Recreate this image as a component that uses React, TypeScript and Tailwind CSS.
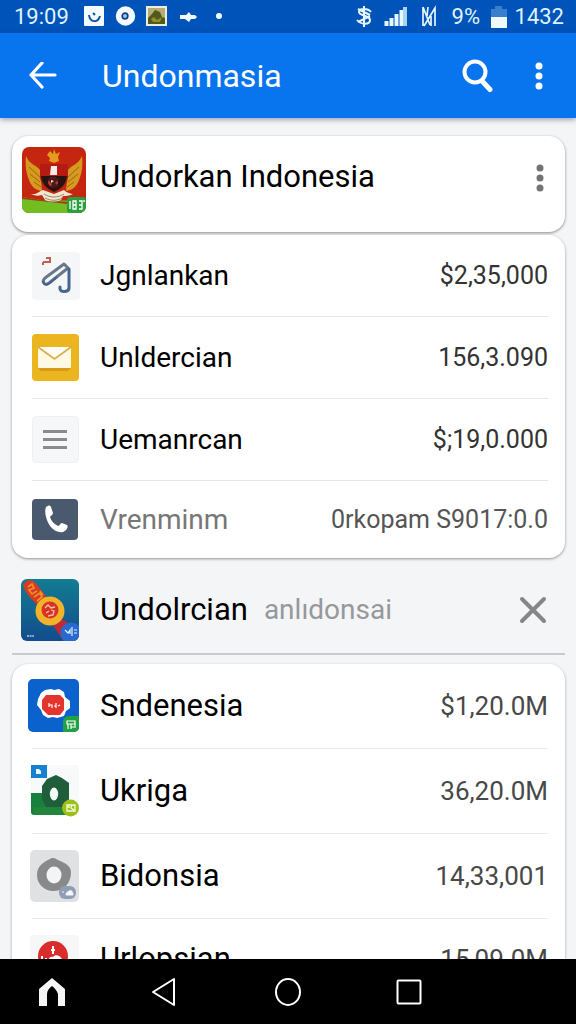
import type { ReactNode } from "react";

type Row = {
  name: string;
  amount: string;
  icon: ReactNode;
  muted?: boolean;
};

function MoreDots({ className }: { className: string }) {
  return (
    <svg viewBox="0 0 10 30" className={className} fill="currentColor" aria-hidden>
      <circle cx="5" cy="5" r="3.5" />
      <circle cx="5" cy="15" r="3.5" />
      <circle cx="5" cy="25" r="3.5" />
    </svg>
  );
}

function EmblemIcon() {
  return (
    <svg viewBox="0 0 64 66" className="h-[66px] w-16 shrink-0" aria-hidden>
      <clipPath id="emblem">
        <rect width="64" height="66" rx="7" />
      </clipPath>
      <g clipPath="url(#emblem)">
        <rect width="64" height="66" fill="#c4260f" />
        <path d="M0 50l20 3 44 1v12H0z" fill="#72bd22" />
        <path d="M0 50l20 3 26 2v2L0 52z" fill="#a33c14" />
        <path
          d="M4 9c4 9 9 8 14 14l2 21c-7-1-11-5-13-11C4 26 3 17 4 9zM60 9c-4 9-9 8-14 14l-2 21c7-1 11-5 13-11 3-7 4-16 3-24z"
          fill="#d69a20"
        />
        <path
          d="M7 20l11 10M8 27l10 8M12 35l7 5M57 20L46 30M56 27l-10 8M52 35l-7 5"
          stroke="#9c6510"
          strokeWidth="1"
        />
        <path d="M28 4l3 3 1-5 2 5 4-2-2 5 1 4-5 2-5-2 1-3-3-3z" fill="#e59b1c" />
        <path d="M18 17h28v12c0 8-5 13-14 16-9-3-14-8-14-16z" fill="#b51b12" />
        <path d="M19 29h26c-1 8-5 12-13 16-8-4-12-8-13-16z" fill="#271411" />
        <path d="M29 19h6v9h-7z" fill="#f5eee7" />
        <circle cx="31" cy="35" r="5" fill="#c53b2c" />
        <path d="M25 32l6-2 7 2-5 4 4 4-9 1 2-4z" fill="#4b1a18" />
        <path d="M29 33l3 1-3 2z" fill="#f6ddd5" />
        <path
          d="M9 47c6 1 8-3 12-4l11 4 10-4c3 3 5 3 9 4-4 2-7 2-10 2l-2 4c-5 2-11 2-16 0l-3-5c-4 1-7 1-11-1z"
          fill="#eee6d1"
        />
        <path d="M22 47c6 4 14 4 20 0M23 51c6 3 12 3 17 0" stroke="#9b845f" strokeWidth="1" fill="none" />
        <rect x="45" y="50" width="19" height="16" rx="3" fill="#2c9e3d" />
        <path
          d="M48 54v8M51 54h3v8h-3zM51 58h3M57 54h3v8h-3M57 58h3M62 53v2"
          stroke="#fff"
          strokeWidth="1.3"
          fill="none"
        />
      </g>
    </svg>
  );
}

function SketchIcon() {
  return (
    <svg viewBox="0 0 48 48" className="size-12" aria-hidden>
      <rect width="48" height="48" rx="4" fill="#f4f6f8" />
      <path d="M11 13v-3M11 10h3M14 6h4v5M14 10h3" stroke="#c35d55" strokeWidth="2" fill="none" />
      <path
        d="M32 12L13 26c-4 4 0 8 4 5l19-15z"
        fill="none"
        stroke="#68788a"
        strokeWidth="3"
        strokeLinejoin="round"
      />
      <path d="M11 29c1 5 4 4 7 2l7-6" fill="none" stroke="#3f6390" strokeWidth="2" />
      <path
        d="M37 17v19c0 4-8 5-9 1v-2"
        fill="none"
        stroke="#45678f"
        strokeWidth="3"
        strokeLinecap="round"
      />
    </svg>
  );
}

function MailIcon() {
  return (
    <svg viewBox="0 0 48 48" className="size-12" aria-hidden>
      <rect width="47" height="47" rx="4" fill="#ebb51f" />
      <path d="M6 34h33l-3 3H9z" fill="#d69a14" />
      <rect x="6" y="13" width="33" height="21" rx="1" fill="#fff8e3" />
      <path d="M6 13l16.5 12L39 13" fill="#fffdf5" stroke="#d8ae48" strokeWidth="1.6" />
    </svg>
  );
}

function LinesIcon() {
  return (
    <svg viewBox="0 0 48 48" className="size-12" aria-hidden>
      <rect x=".5" y=".5" width="46" height="46" rx="4" fill="#f6f7f9" stroke="#eff0f3" />
      <path d="M11 15.500h24M11 23.500h24M11 31.500h24" stroke="#8b8b8f" strokeWidth="3" />
    </svg>
  );
}

function PhoneIcon() {
  return (
    <svg viewBox="0 0 48 42" className="h-[42px] w-12" aria-hidden>
      <rect width="46" height="41" rx="4" fill="#4a596e" />
      <path
        d="M14 8c2-2 4-2 5 0l2 6c0 2-3 3-3 4 1 4 4 7 8 9 2 0 2-3 4-3l5 2c2 2-1 6-4 7-4 1-9-1-13-6-4-6-6-14-4-19z"
        fill="#fff"
      />
    </svg>
  );
}

function MedalIcon() {
  return (
    <svg viewBox="0 0 58 62" className="h-[62px] w-[58px] shrink-0" aria-hidden>
      <defs>
        <linearGradient id="medal-sky" x1="0" y1="0" x2="0" y2="1">
          <stop offset="0" stopColor="#137c91" />
          <stop offset="1" stopColor="#124c8d" />
        </linearGradient>
        <clipPath id="medal">
          <rect width="58" height="62" rx="6" />
        </clipPath>
      </defs>
      <g clipPath="url(#medal)">
        <rect width="58" height="62" fill="url(#medal-sky)" />
        <path d="M2 6C6-2 14 1 17 7l10 13-9 7C10 20 4 14 2 6z" fill="#d43c23" />
        <path
          d="M7 8l4-3 2 4-5 2 3 4 5-3M13 18l6-4 2 4-5 4M19 12l3 4"
          stroke="#f28c28"
          strokeWidth="1.7"
          fill="none"
        />
        <path d="M31 45l9-5c7 3 12 7 18 11v13H44z" fill="#bd2b38" />
        <circle cx="29" cy="32" r="14.5" fill="#f2b229" />
        <circle cx="29" cy="31" r="8.5" fill="#d83224" />
        <path d="M24 29l3-3 3 3 4-1M25 34l3-2M30 31l3 1-1 4-5 1" stroke="#f6c5a8" strokeWidth="1.3" fill="none" />
        <circle cx="50" cy="54" r="10.5" fill="#2869cf" />
        <path d="M44 51l3 3 2-3v4M51 48v9M53 51h3M53 54h3" stroke="#e6f0ff" strokeWidth="1.2" fill="none" />
        <path d="M6 57h7" stroke="#a9cbe0" strokeWidth="1.5" strokeDasharray="2 .6" />
      </g>
    </svg>
  );
}

function BadgeBlueIcon() {
  return (
    <svg viewBox="0 0 52 54" className="h-[54px] w-[52px]" aria-hidden>
      <clipPath id="badge-blue">
        <rect width="51" height="53" rx="5" />
      </clipPath>
      <g clipPath="url(#badge-blue)">
        <rect width="52" height="54" fill="#0c62cd" />
        <path
          d="M13 14l4-3 6-1 3 1 5-1 5 3 1 5 5 4v7l-4 3-2 5-7 2-4-1-5 1-5-3-2-5-4-5 1-6z"
          fill="#fff"
        />
        <path d="M18 16h14l4 4v11l-4 5H20l-6-6v-9z" fill="#e4352d" />
        <path d="M21 24v4M21 26h3v3M26 27h2M28 24v5M30 27l2-1" stroke="#fff" strokeWidth="1.2" fill="none" />
        <path d="M35 53V43c0-4 3-6 7-6h10v16z" fill="#22a143" />
        <path d="M39 42h8v3h-8zM40 50v-5M43 45v5M46 48h-3M47 45v4" stroke="#fff" strokeWidth="1.2" fill="none" />
      </g>
    </svg>
  );
}

function BadgeGreenIcon() {
  return (
    <svg viewBox="0 0 52 54" className="h-[54px] w-[52px]" aria-hidden>
      <rect x="3" y="1" width="48" height="50" rx="3" fill="#f7faf9" />
      <path d="M3 29h17v22H6c-2 0-3-1-3-3z" fill="#16803c" />
      <path d="M5 43h38v8H6z" fill="#23853b" />
      <rect x="3" y="1" width="16" height="13" fill="#1681cf" />
      <path d="M8 5h3l2 2v3H8z" fill="#eaf6ff" />
      <path d="M28 11l6 3 7 5v19l-5 5H18l-4-8V22l5-7z" fill="#1f5d3b" />
      <ellipse cx="26" cy="30" rx="4.2" ry="6.5" fill="#f3faf5" />
      <circle cx="42.5" cy="44" r="8.5" fill="#9dbf19" />
      <path d="M39 41h8v6h-8zM39 43h3M44 41l-1 3 3 2" stroke="#f4ffd8" strokeWidth="1.3" fill="none" />
    </svg>
  );
}

function BadgeGreyIcon() {
  return (
    <svg viewBox="0 0 52 54" className="h-[54px] w-[52px]" aria-hidden>
      <rect x="2" y="1" width="49" height="52" rx="5" fill="#dfe1e3" />
      <path
        d="M25 9c3 0 4 2 7 3 5 2 11 5 11 11 0 10-6 19-17 19S9 34 9 26c0-7 4-11 9-14 3-1 4-3 7-3z"
        fill="#87898b"
      />
      <ellipse cx="26" cy="26" rx="7.5" ry="8.5" fill="#f3f4f5" />
      <rect x="31" y="37" width="17" height="13" rx="6" fill="#8f9db5" />
      <path d="M38 46c0-3 2-3 3-4 3-1 4 1 4 4zM34 43h2" fill="#f4f7fc" stroke="#f4f7fc" strokeWidth="1" />
    </svg>
  );
}

function BadgeRedIcon() {
  return (
    <svg viewBox="0 0 52 54" className="h-[54px] w-[52px]" aria-hidden>
      <rect x="2" y="3" width="49" height="51" rx="4" fill="#f7f7f7" />
      <circle cx="25" cy="24" r="15" fill="#d92d2d" />
      <path d="M25 14v8M23 18h4M14 24v10M18 26v8" stroke="#fff" strokeWidth="2" fill="none" />
      <path d="M21 28c0-3 2-4 4-3 2-3 7-2 9 2v9H21z" fill="#fff" />
    </svg>
  );
}

const services: Row[] = [
  { name: "Jgnlankan", amount: "$2,35,000", icon: <SketchIcon /> },
  { name: "Unldercian", amount: "156,3.090", icon: <MailIcon /> },
  { name: "Uemanrcan", amount: "$;19,0.000", icon: <LinesIcon /> },
  { name: "Vrenminm", amount: "0rkopam S9017:0.0", icon: <PhoneIcon />, muted: true },
];

const accounts: Row[] = [
  { name: "Sndenesia", amount: "$1,20.0M", icon: <BadgeBlueIcon /> },
  { name: "Ukriga", amount: "36,20.0M", icon: <BadgeGreenIcon /> },
  { name: "Bidonsia", amount: "14,33,001", icon: <BadgeGreyIcon /> },
  { name: "Urlopsian", amount: "15,09.0M", icon: <BadgeRedIcon /> },
];

function StatusBar() {
  return (
    <div className="flex h-[33px] shrink-0 items-center justify-between bg-[#0053b8] pr-3 pl-3.5 text-[22px] leading-none text-[#dff3ff]">
      <div className="flex items-center">
        <span className="w-[70px]">19:09</span>
        <svg viewBox="0 0 140 22" className="h-[22px] w-[140px]" aria-hidden>
          <rect y="0" width="20" height="20" rx="1" fill="#f2fcff" />
          <path d="M5 9c1 8 9 8 11 1M9 7l2 2" stroke="#14529b" strokeWidth="2" fill="none" />
          <circle cx="41.5" cy="10" r="9.7" fill="#f2fcff" />
          <circle cx="41" cy="10" r="2.8" fill="#9cc4ee" stroke="#123f80" strokeWidth="1.7" />
          <rect x="62" y="0" width="21" height="20" fill="#e9efdc" />
          <rect x="64" y="2" width="17" height="16" fill="#b5ac78" />
          <path d="M64 12l4-4 3-4 5 2 2 5 3 1v6H64z" fill="#505a1b" />
          <path d="M67 13l3-2 3 3 5-3-2 5h-7z" fill="#949029" />
          <path d="M96 9h6l3-3 2 3h4l2 2-2 2h-4l-2 3-4-3h-5z" fill="#f2fcff" />
          <circle cx="135" cy="10" r="3" fill="#f2fcff" />
        </svg>
      </div>
      <div className="flex items-center">
        <svg viewBox="0 0 86 24" className="mr-2.5 h-6 w-[86px]" fill="none" stroke="#e6f7ff" aria-hidden>
          <path d="M8 1v21M15 7c-3-4-12-4-12 0s11 3 11 8-9 5-13 0M2 4l12 6M2 17l12-6" strokeWidth="2" />
          <path d="M30.500 21v-5M35.500 21v-8M40.500 21V9" strokeWidth="4" />
          <path d="M45.500 21V5" strokeWidth="4" />
          <path d="M49 21V2" strokeWidth="4" stroke="#a8d4f7" />
          <path d="M67 2v19M67 2l7 18M68 21L79 3v18M72 2l-1 9M75 21V11" strokeWidth="1.7" />
        </svg>
        <span className="w-[35px]">9%</span>
        <svg viewBox="0 0 16 22" className="mr-2 ml-1 h-[22px] w-4" aria-hidden>
          <path d="M0 3h4V0h7v3h5v9H0z" fill="#3a7fcd" />
          <path d="M0 11h16v11H0z" fill="#eefaff" />
        </svg>
        <span>1432</span>
      </div>
    </div>
  );
}

function AppBar() {
  return (
    <header className="z-10 flex h-[85px] shrink-0 items-center bg-[#0875ee] pr-8 pl-7 text-white shadow-[0_2px_5px_rgba(60,70,110,0.45)]">
      <button type="button" aria-label="Back" className="flex w-[74px] shrink-0">
        <svg viewBox="0 0 30 28" className="h-7 w-[30px]" fill="none" stroke="currentColor" strokeWidth="3.2" aria-hidden>
          <path d="M27 13H3M14 1L3 13l11 12" strokeLinecap="round" strokeLinejoin="round" />
        </svg>
      </button>
      <h1 className="flex-1 text-[32px] leading-10">Undonmasia</h1>
      <button type="button" aria-label="Search" className="mr-10">
        <svg viewBox="0 0 32 34" className="h-[34px] w-8" fill="none" stroke="currentColor" aria-hidden>
          <circle cx="13" cy="13" r="10.5" strokeWidth="4" />
          <path d="M20 22l8 8.5" strokeWidth="5" strokeLinecap="round" />
        </svg>
      </button>
      <button type="button" aria-label="More options">
        <MoreDots className="h-[30px] w-2.5" />
      </button>
    </header>
  );
}

function ServiceRow({ name, amount, icon, muted }: Row) {
  return (
    <li className="mr-[17px] ml-5 flex h-[82px] items-center gap-5 border-b border-[#e6e7ea] last:h-[77px] last:border-b-0">
      {icon}
      <span className={"flex-1 text-[28px] leading-9 " + (muted ? "text-[#777777]" : "text-black")}>
        {name}
      </span>
      <span className={"text-[25px] leading-9 " + (muted ? "text-[#555555]" : "text-[#333333]")}>
        {amount}
      </span>
    </li>
  );
}

function AccountRow({ name, amount, icon }: Row) {
  return (
    <li className="mr-[17px] ml-5 flex h-[85px] items-center gap-5 border-b border-[#e9eaec] last:h-20 last:border-b-0">
      <span className="-ml-1">{icon}</span>
      <span className="flex-1 text-[31px] leading-9 text-black">{name}</span>
      <span className="text-[26px] leading-9 text-[#484848]">{amount}</span>
    </li>
  );
}

function NavBar() {
  return (
    <nav
      aria-label="System"
      className="grid h-[65px] shrink-0 grid-cols-[18%_21%_22%_20%] items-center justify-items-center bg-black text-white"
    >
      <button type="button" aria-label="Home">
        <svg viewBox="0 0 28 30" className="h-[30px] w-7" fill="#f5f5f5" aria-hidden>
          <path d="M14 1l13 11v17h-7V17c-1-3-3-6-6-8-3 2-5 5-5 8v12H1V12z" />
        </svg>
      </button>
      <button type="button" aria-label="Back">
        <svg viewBox="0 0 26 30" className="h-[30px] w-[26px]" fill="none" stroke="currentColor" strokeWidth="2" aria-hidden>
          <path d="M23 2v26L2 15z" strokeLinejoin="round" />
        </svg>
      </button>
      <button type="button" aria-label="Overview">
        <svg viewBox="0 0 28 30" className="h-[30px] w-7" fill="none" stroke="currentColor" strokeWidth="2" aria-hidden>
          <ellipse cx="14" cy="15" rx="12" ry="13" />
        </svg>
      </button>
      <button type="button" aria-label="Recent apps">
        <svg viewBox="0 0 26 26" className="size-[26px]" fill="none" stroke="currentColor" strokeWidth="2" aria-hidden>
          <rect x="1.5" y="1.5" width="23" height="23" rx="1" />
        </svg>
      </button>
    </nav>
  );
}

export default function App() {
  return (
    <div className="flex h-screen flex-col bg-[#f4f5f6] font-['Roboto','Liberation_Sans',sans-serif]">
      <StatusBar />
      <AppBar />

      <main className="min-h-0 flex-1 overflow-hidden pt-[18px] pr-[11px] pl-3">
        <section className="mb-[3px] flex h-24 items-center rounded-2xl bg-white pr-5 pb-2 pl-2.5 shadow-[0_1px_3px_rgba(0,0,0,0.45)]">
          <EmblemIcon />
          <h2 className="ml-3.5 flex-1 pb-1.5 text-[31px] leading-9 text-black">Undorkan Indonesia</h2>
          <button type="button" aria-label="More" className="pb-1 text-[#747474]">
            <MoreDots className="h-[30px] w-2.5" />
          </button>
        </section>

        <ul className="rounded-2xl bg-white shadow-[0_1px_3px_rgba(0,0,0,0.4)]">
          {services.map((row) => (
            <ServiceRow key={row.name} {...row} />
          ))}
        </ul>

        <div className="mb-[9px] flex h-[97px] items-center border-b-2 border-[#c9cbd1] pt-2 pr-[18px] pl-[9px]">
          <MedalIcon />
          <h2 className="ml-[21px] text-[31px] leading-9 text-black">Undolrcian</h2>
          <span className="ml-4 flex-1 text-[28px] leading-9 text-[#96989b]">anlıdonsai</span>
          <button type="button" aria-label="Close" className="text-[#858688]">
            <svg viewBox="0 0 28 28" className="size-7" stroke="currentColor" strokeWidth="4" aria-hidden>
              <path d="M3 3l22 22M25 3L3 25" strokeLinecap="round" />
            </svg>
          </button>
        </div>

        <ul className="rounded-t-2xl bg-white shadow-[0_1px_3px_rgba(0,0,0,0.35)]">
          {accounts.map((row) => (
            <AccountRow key={row.name} {...row} />
          ))}
        </ul>
      </main>

      <NavBar />
    </div>
  );
}
